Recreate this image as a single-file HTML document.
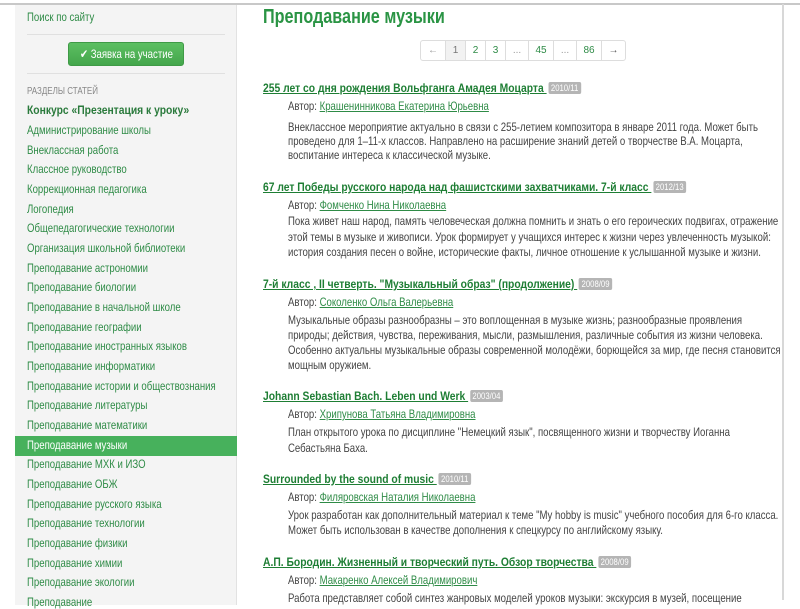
<!DOCTYPE html>
<html><head><meta charset="utf-8"><style>
*{margin:0;padding:0;box-sizing:border-box}
body{width:800px;height:600px;overflow:hidden;background:#fff;position:relative;font-family:"Liberation Sans",Arial,sans-serif;font-size:12px;color:#444}
.a{position:absolute;white-space:nowrap;line-height:14px;transform:scaleX(0.8);transform-origin:0 0}
#topline{position:absolute;left:0;top:0;width:800px;height:5px;border-bottom:2px solid #c8c8c8;background:#fff}
#rline{position:absolute;left:782px;top:4px;width:2px;height:596px;background:#d8d8d8}
#side{position:absolute;left:15px;top:5px;width:222px;height:600px;background:#f4f4f4;border-right:1px solid #e2e2e2}
.sep{position:absolute;left:27px;width:198px;height:1px;background:#e0e0e0}
.s{color:#2e8b46}
.sel{position:absolute;left:15px;top:436px;width:222px;height:20px;background:#47b15c}
.btn{position:absolute;left:68px;top:42px;width:116px;height:24px;background:linear-gradient(#5cbf62,#44a64c);border-radius:3px;border:1px solid #3f9a46;color:#fff}
h1{position:absolute;left:263px;top:5px;font-size:20px;line-height:24px;color:#2a9444;font-weight:bold;white-space:nowrap;transform:scaleX(0.81);transform-origin:0 0}
.pg{position:absolute;left:420px;top:40px;height:21px;display:flex;border:1px solid #ddd;border-radius:3px}
.pg span{display:block;height:19px;line-height:19px;text-align:center;font-size:10px;color:#2e8b46;border-left:1px solid #ddd}
.pg span:first-child{border-left:none}
.t{color:#1e7e34;font-weight:bold;text-decoration:underline;transform:scaleX(0.86)}
.d{display:inline-block;background:#b5b5b5;color:#fff;font-size:9px;line-height:12px;padding:0 3px;border-radius:2px;font-weight:normal;vertical-align:1px;text-decoration:none;margin-left:2px}
.au a{color:#2e8b46;text-decoration:underline}
</style></head><body>
<div id="topline"></div>
<div id="side"></div>
<div id="rline"></div>
<div class="a s" style="left:27px;top:10px">Поиск по сайту</div>
<div class="sep" style="top:34px"></div>
<div class="btn"></div>
<div class="a" style="left:80px;top:47px;color:#fff">✔ Заявка на участие</div>
<div class="sep" style="top:73px"></div>
<div class="a" style="left:27px;top:85px;font-size:10px;color:#888">РАЗДЕЛЫ СТАТЕЙ</div>
<div class="sel"></div>
<div class="a s" style="left:27px;top:103px;font-weight:bold;color:#2a7a3c;transform:scaleX(0.86)">Конкурс «Презентация к уроку»</div>
<div class="a s" style="left:27px;top:123px">Администрирование школы</div>
<div class="a s" style="left:27px;top:143px">Внеклассная работа</div>
<div class="a s" style="left:27px;top:162px">Классное руководство</div>
<div class="a s" style="left:27px;top:182px">Коррекционная педагогика</div>
<div class="a s" style="left:27px;top:202px">Логопедия</div>
<div class="a s" style="left:27px;top:221px">Общепедагогические технологии</div>
<div class="a s" style="left:27px;top:241px">Организация школьной библиотеки</div>
<div class="a s" style="left:27px;top:261px">Преподавание астрономии</div>
<div class="a s" style="left:27px;top:280px">Преподавание биологии</div>
<div class="a s" style="left:27px;top:300px">Преподавание в начальной школе</div>
<div class="a s" style="left:27px;top:320px">Преподавание географии</div>
<div class="a s" style="left:27px;top:339px">Преподавание иностранных языков</div>
<div class="a s" style="left:27px;top:359px">Преподавание информатики</div>
<div class="a s" style="left:27px;top:379px">Преподавание истории и обществознания</div>
<div class="a s" style="left:27px;top:398px">Преподавание литературы</div>
<div class="a s" style="left:27px;top:418px">Преподавание математики</div>
<div class="a" style="left:27px;top:438px;color:#fff">Преподавание музыки</div>
<div class="a s" style="left:27px;top:457px">Преподавание МХК и ИЗО</div>
<div class="a s" style="left:27px;top:477px">Преподавание ОБЖ</div>
<div class="a s" style="left:27px;top:497px">Преподавание русского языка</div>
<div class="a s" style="left:27px;top:516px">Преподавание технологии</div>
<div class="a s" style="left:27px;top:536px">Преподавание физики</div>
<div class="a s" style="left:27px;top:556px">Преподавание химии</div>
<div class="a s" style="left:27px;top:575px">Преподавание экологии</div>
<div class="a s" style="left:27px;top:595px">Преподавание</div>

<h1>Преподавание музыки</h1>
<div class="pg">
<span style="width:24px;color:#999">←</span><span style="width:20px;background:#f2f2f2;color:#777">1</span><span style="width:20px">2</span><span style="width:20px">3</span><span style="width:23px;color:#999">...</span><span style="width:25px">45</span><span style="width:23px;color:#999">...</span><span style="width:25px">86</span><span style="width:24px;color:#555">→</span>
</div>

<div class="a t" style="left:263px;top:81px">255 лет со дня рождения Вольфганга Амадея Моцарта <span class="d">2010/11</span></div>
<div class="a au" style="left:288px;top:99px">Автор: <a>Крашенинникова Екатерина Юрьевна</a></div>
<div class="a" style="left:288px;top:120px">Внеклассное мероприятие актуально в связи с 255-летием композитора в январе 2011 года. Может быть</div>
<div class="a" style="left:288px;top:134px">проведено для 1–11-х классов. Направлено на расширение знаний детей о творчестве В.А. Моцарта,</div>
<div class="a" style="left:288px;top:148px">воспитание интереса к классической музыке.</div>

<div class="a t" style="left:263px;top:180px">67 лет Победы русского народа над фашистскими захватчиками. 7-й класс <span class="d">2012/13</span></div>
<div class="a au" style="left:288px;top:198px">Автор: <a>Фомченко Нина Николаевна</a></div>
<div class="a" style="left:288px;top:214px">Пока живет наш народ, память человеческая должна помнить и знать о его героических подвигах, отражение</div>
<div class="a" style="left:288px;top:230px">этой темы в музыке и живописи. Урок формирует у учащихся интерес к жизни через увлеченность музыкой:</div>
<div class="a" style="left:288px;top:245px">история создания песен о войне, исторические факты, личное отношение к услышанной музыке и жизни.</div>

<div class="a t" style="left:263px;top:277px">7-й класс , II четверть. "Музыкальный образ" (продолжение) <span class="d">2008/09</span></div>
<div class="a au" style="left:288px;top:295px">Автор: <a>Соколенко Ольга Валерьевна</a></div>
<div class="a" style="left:288px;top:313px">Музыкальные образы разнообразны – это воплощенная в музыке жизнь; разнообразные проявления</div>
<div class="a" style="left:288px;top:328px">природы; действия, чувства, переживания, мысли, размышления, различные события из жизни человека.</div>
<div class="a" style="left:288px;top:343px">Особенно актуальны музыкальные образы современной молодёжи, борющейся за мир, где песня становится</div>
<div class="a" style="left:288px;top:358px">мощным оружием.</div>

<div class="a t" style="left:263px;top:389px">Johann Sebastian Bach. Leben und Werk <span class="d">2003/04</span></div>
<div class="a au" style="left:288px;top:407px">Автор: <a>Хрипунова Татьяна Владимировна</a></div>
<div class="a" style="left:288px;top:425px">План открытого урока по дисциплине "Немецкий язык", посвященного жизни и творчеству Иоганна</div>
<div class="a" style="left:288px;top:441px">Себастьяна Баха.</div>

<div class="a t" style="left:263px;top:472px">Surrounded by the sound of music <span class="d">2010/11</span></div>
<div class="a au" style="left:288px;top:490px">Автор: <a>Филяровская Наталия Николаевна</a></div>
<div class="a" style="left:288px;top:508px">Урок разработан как дополнительный материал к теме "My hobby is music" учебного пособия для 6-го класса.</div>
<div class="a" style="left:288px;top:523px">Может быть использован в качестве дополнения к спецкурсу по английскому языку.</div>

<div class="a t" style="left:263px;top:555px">А.П. Бородин. Жизненный и творческий путь. Обзор творчества <span class="d">2008/09</span></div>
<div class="a au" style="left:288px;top:573px">Автор: <a>Макаренко Алексей Владимирович</a></div>
<div class="a" style="left:288px;top:591px">Работа представляет собой синтез жанровых моделей уроков музыки: экскурсия в музей, посещение</div>
</body></html>
